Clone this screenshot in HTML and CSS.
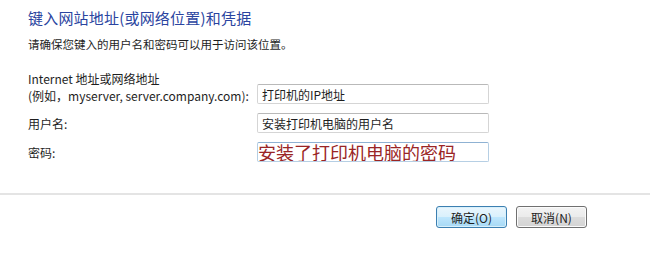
FILE: index.html
```html
<!DOCTYPE html>
<html lang="zh-CN">
<head>
    <meta charset="UTF-8">
    <title>键入网站地址(或网络位置)和凭据</title>
    <link rel="stylesheet" href="styles.css">
</head>
<body>
    <div class="dialog">
        <div class="content">
            <h1 class="title">键入网站地址(或网络位置)和凭据</h1>
            <p class="hint">请确保您键入的用户名和密码可以用于访问该位置。</p>
            <div class="form">
                <label class="label two-line" for="address">Internet 地址或网络地址<br>(例如，myserver, server.company.com):</label>
                <input class="field end" type="text" id="address" value="打印机的IP地址">
                <label class="label" for="user">用户名:</label>
                <input class="field" type="text" id="user" value="安装打印机电脑的用户名">
                <label class="label" for="pass">密码:</label>
                <input class="field password" type="text" id="pass" value="安装了打印机电脑的密码">
            </div>
        </div>
        <div class="footer">
            <button class="btn default">确定(O)</button>
            <button class="btn">取消(N)</button>
        </div>
    </div>
</body>
</html>
```

FILE: styles.css
```css
body {
    margin: 0;
    background-color: #ffffff;
    font-family: "Noto Sans CJK SC", "DejaVu Sans", sans-serif;
    color: #1e1e1e;
}

.content {
    padding: 8px 0 0 28px;
    height: 185px;
}

.title {
    margin: 0;
    font-size: 15px;
    font-weight: normal;
    line-height: 20px;
    color: #2a44a0;
    letter-spacing: 0.2px;
}

.hint {
    margin: 8px 0 0;
    font-size: 11.5px;
    line-height: 16px;
}

.form {
    display: grid;
    grid-template-columns: 229px 232px;
    row-gap: 9px;
    margin-top: 18px;
}

.label {
    align-self: center;
    font-size: 12px;
    line-height: 17px;
}

.field {
    box-sizing: border-box;
    height: 20px;
    margin: 0;
    padding: 0 4px;
    border: 1px solid #d5d5d5;
    border-top-color: #b9b9b9;
    border-radius: 2px;
    font-family: inherit;
    font-size: 12px;
    color: #1e1e1e;
    background: #ffffff;
    outline: none;
}

.end {
    align-self: end;
}

.password {
    padding: 0;
    font-size: 18px;
    color: #9a2525;
    border-color: #b6cfe4;
    border-top-color: #8fb2d3;
    overflow: visible;
}

.footer {
    display: flex;
    justify-content: flex-end;
    gap: 9px;
    padding: 11px 63px 0 0;
    border-top: 2px solid #e4e4e4;
}

.btn {
    width: 71px;
    height: 22px;
    padding: 0;
    font-family: inherit;
    font-size: 12px;
    color: #1e1e1e;
    border: 1px solid #707070;
    border-radius: 3px;
    background: linear-gradient(#f3f3f3, #ebebeb 50%, #dcdcdc 51%, #d4d4d4);
    box-shadow: inset 0 0 0 1px #fbfbfb;
}

.btn.default {
    border-color: #3c7fb1;
    background: linear-gradient(#eaf6fd, #d9f0fc 50%, #bee6fd 51%, #a7d9f5);
    box-shadow: inset 0 0 0 1px #d8f0fb;
}
```
